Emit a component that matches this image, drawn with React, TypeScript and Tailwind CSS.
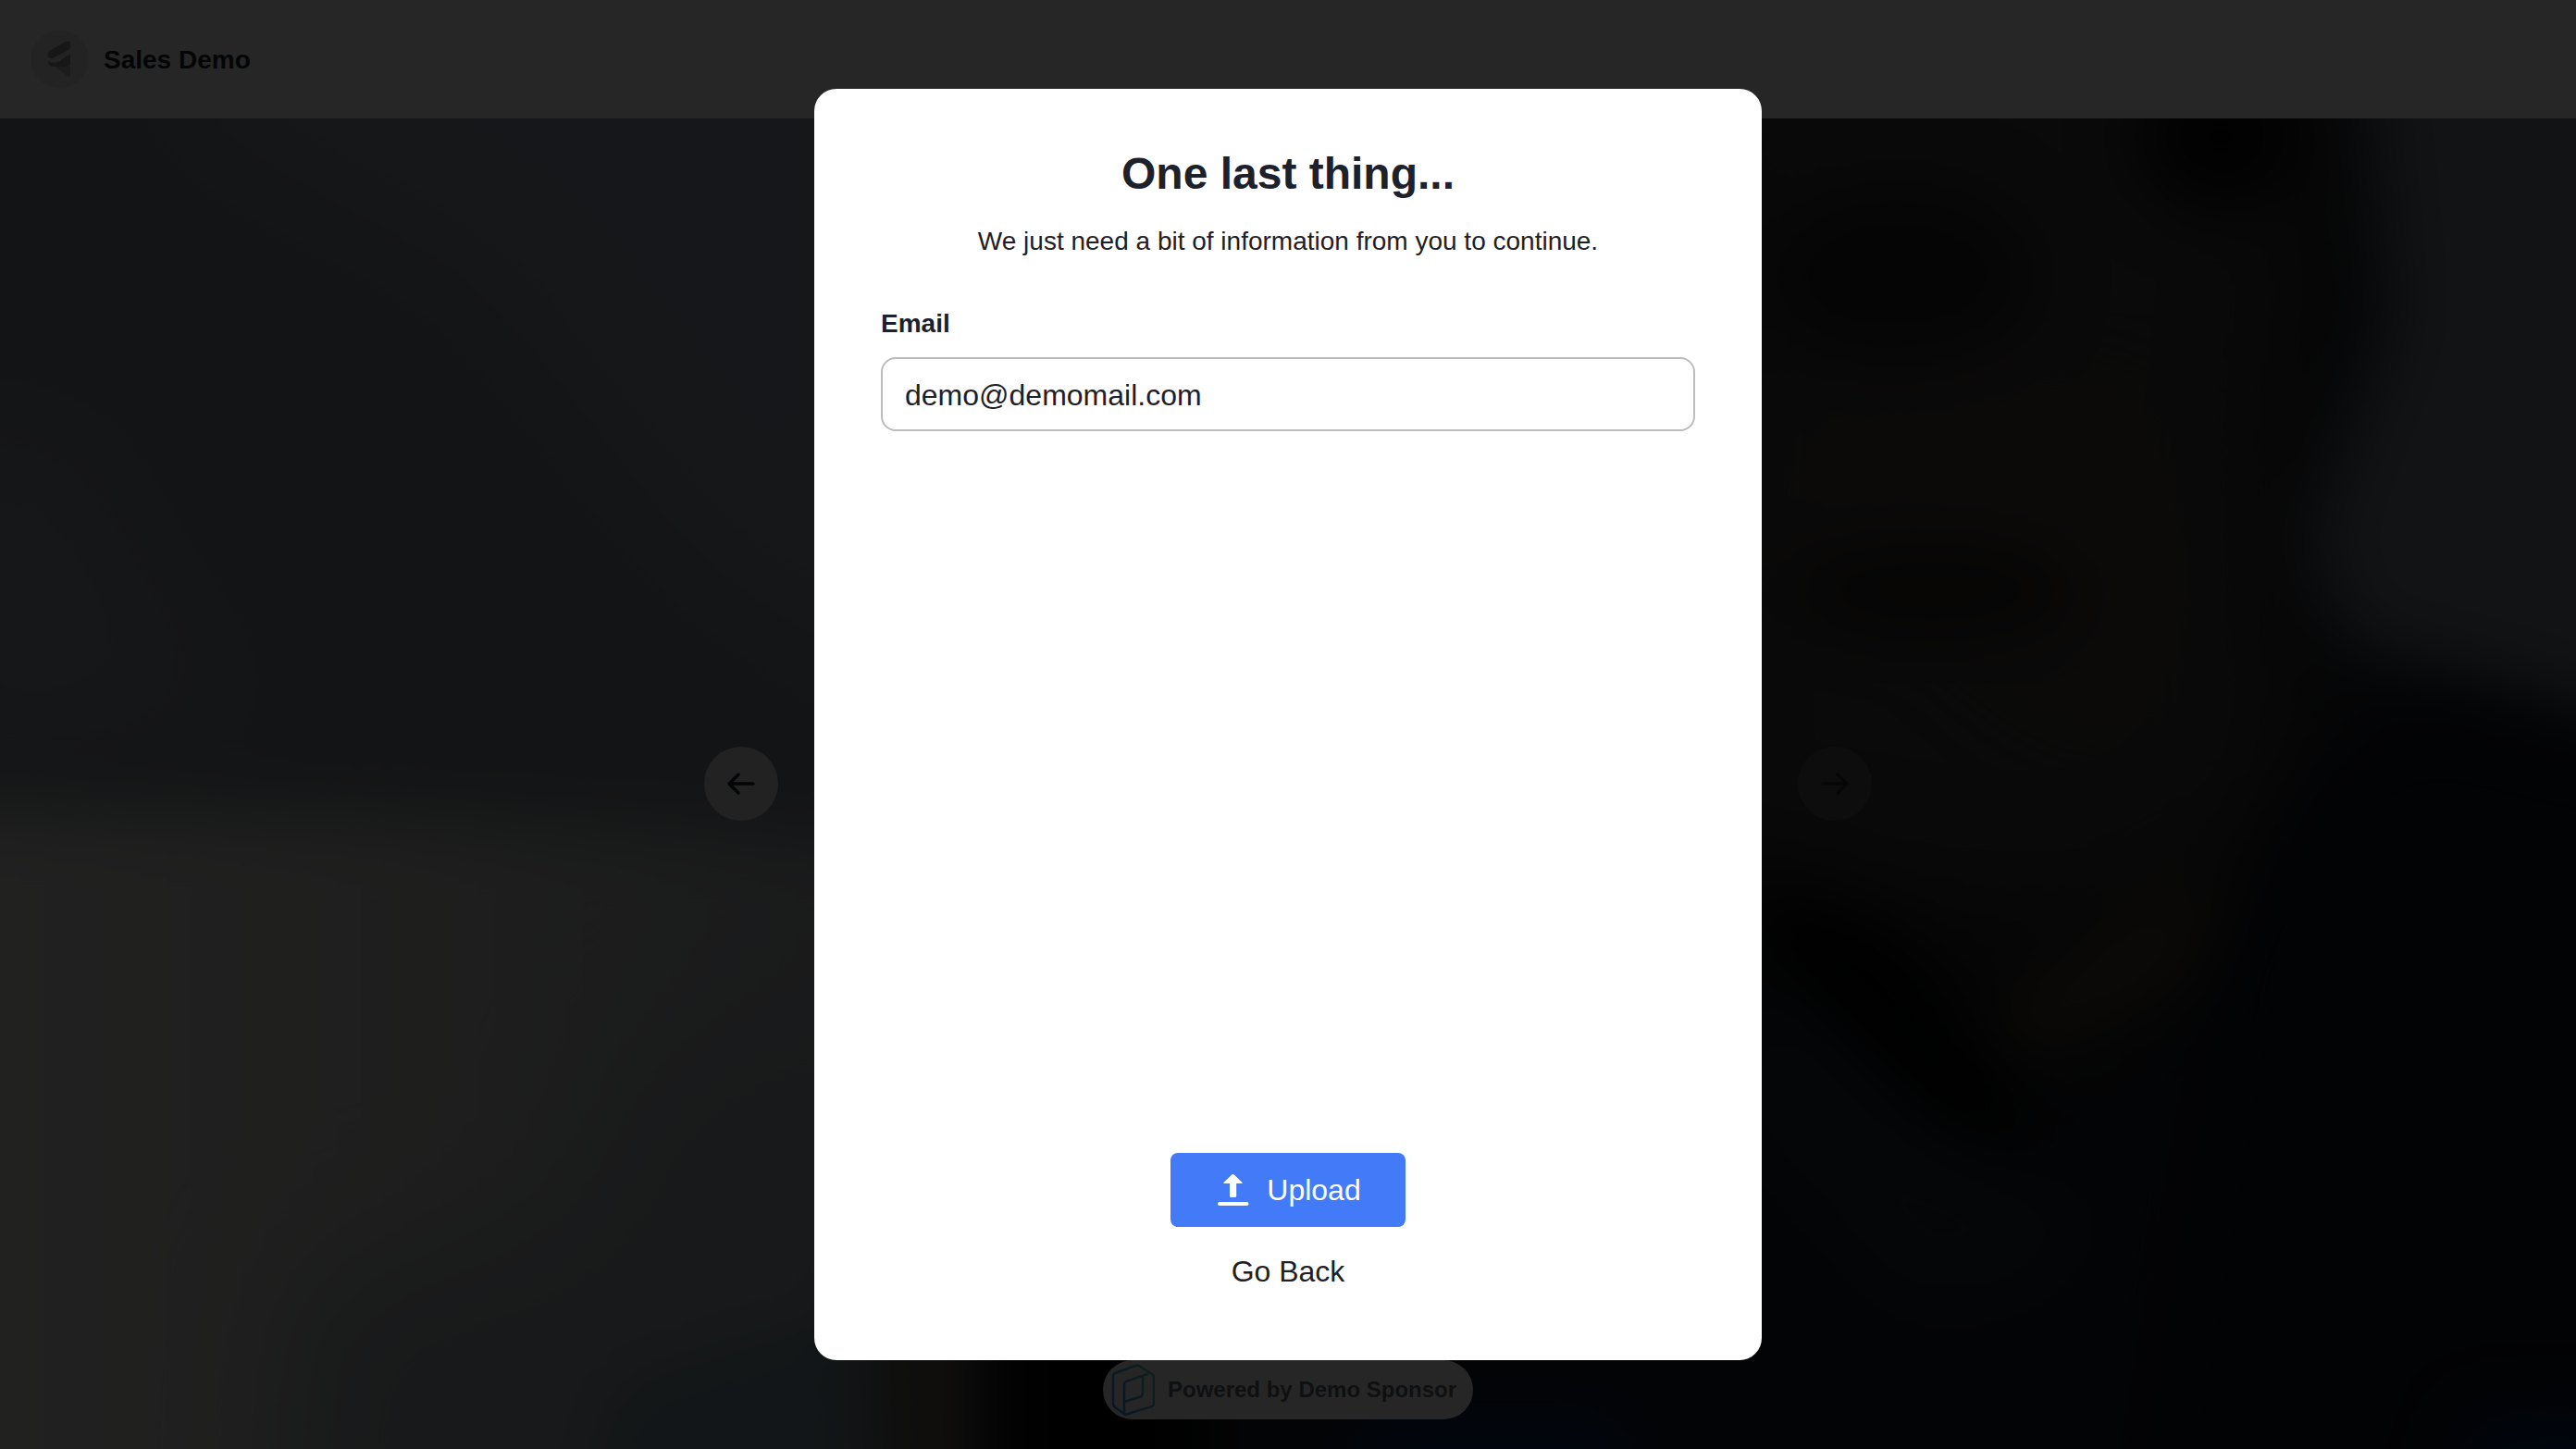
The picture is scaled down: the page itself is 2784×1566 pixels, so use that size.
import { useState } from "react";

// Blurred photo behind the carousel
function Backdrop() {
  return (
    <svg
      className="absolute inset-0 h-full w-full"
      viewBox="0 0 2784 1438"
      preserveAspectRatio="none"
      aria-hidden="true"
    >
      <defs>
        <filter id="soft" x="-50%" y="-50%" width="200%" height="200%" colorInterpolationFilters="sRGB">
          <feGaussianBlur stdDeviation="70" />
        </filter>
        <filter id="edge" x="-50%" y="-50%" width="200%" height="200%" colorInterpolationFilters="sRGB">
          <feGaussianBlur stdDeviation="36" />
        </filter>
        <linearGradient id="floor" x1="0" y1="0" x2="1" y2="0">
          <stop offset="0" stopColor="#dfdfdd" />
          <stop offset="0.15" stopColor="#dadad7" />
          <stop offset="0.45" stopColor="#c8cac4" />
          <stop offset="0.75" stopColor="#b0b4b8" />
          <stop offset="1" stopColor="#9aa3aa" />
        </linearGradient>
      </defs>
      <rect width="2784" height="1438" fill="#81868e" />
      <path d="M200 -200H1000V640L760 480L520 170L200 0Z" fill="#959cab" filter="url(#soft)" />
      <path d="M-100 330L80 340L190 560L300 640L-100 700Z" fill="#959ba2" filter="url(#soft)" />
      <path d="M-200 745L400 755L1200 790V1700H-200Z" fill="url(#floor)" filter="url(#edge)" />
      <path d="M320 1260L620 1180L700 1000L1000 940V1700H300Z" fill="#a2a8ae" filter="url(#soft)" />
      <path d="M660 1360L1000 1260V1600H600Z" fill="#7c94a0" filter="url(#edge)" />
      <path d="M1000 -200H3000V1700H990Z" fill="#1a1e26" filter="url(#edge)" />
      <path d="M930 1250H1070V1600H960Z" fill="#6b625c" filter="url(#edge)" />
      <path d="M1080 1250H1300V1600H1080Z" fill="#050505" filter="url(#edge)" />
      <path d="M1850 -200H2520L2450 500L2500 720L2300 860L2150 860L1800 800Z" fill="#484242" filter="url(#soft)" />
      <ellipse cx="2050" cy="170" rx="150" ry="100" fill="#2a2424" filter="url(#edge)" />
      <path d="M1930 370L2160 340L2330 380L2360 590L2270 600L2100 450L1940 460Z" fill="#504740" filter="url(#soft)" />
      <ellipse cx="2090" cy="510" rx="160" ry="50" fill="#2a2421" filter="url(#edge)" />
      <ellipse cx="2400" cy="20" rx="90" ry="80" fill="#0b0b0b" filter="url(#edge)" />
      <path d="M2550 -100H2950V690L2730 620L2540 570L2490 460L2580 220Z" fill="#747f88" filter="url(#edge)" />
      <path d="M2500 700L2620 640L2950 720V1500H2300L2400 900Z" fill="#10141e" filter="url(#edge)" />
      <path d="M2130 980L2400 800L2360 930L2210 1010Z" fill="#594833" filter="url(#edge)" />
      <path d="M1900 820L2050 880L2200 1100L2130 1130L1900 900Z" fill="#040404" filter="url(#edge)" />
      <path d="M1900 930L2060 1090L2260 1190L2180 1270L2060 1280L1880 1080Z" fill="#222e3a" filter="url(#edge)" />
      <path d="M1480 1400H1760V1600H1400Z" fill="#0a2660" filter="url(#edge)" />
      <path d="M2680 1410H2850V1600H2620Z" fill="#0a2a68" filter="url(#edge)" />
    </svg>
  );
}

function BrandMark() {
  return (
    <svg className="h-16 w-16" viewBox="0 0 64 64" aria-hidden="true">
      <circle cx="32.500" cy="32" r="31.500" fill="#e8e8e8" />
      <path d="M44 13v6q0 2-2 3L26 30.500q-5 2-6.500-2v-2Q20 24 23 22L38 13.500Q41 12 44 13Z" fill="#979797" />
      <path d="M44 27v10q0 3-3 3H26Q20 40 20 34 26 37 33 34 37 29 44 27Z" fill="#9c9c9c" />
      <path d="M28 40H44V51Q41 51 38 48Z" fill="#bababa" />
    </svg>
  );
}

function SponsorMark() {
  return (
    <svg
      className="h-14 w-12"
      viewBox="0 0 48 56"
      fill="none"
      stroke="url(#sponsor)"
      strokeWidth="2.500"
      strokeLinejoin="round"
      strokeLinecap="round"
      aria-hidden="true"
    >
      <defs>
        <linearGradient id="sponsor" x1="0" y1="40" x2="48" y2="10" gradientUnits="userSpaceOnUse">
          <stop offset="0" stopColor="#3f8fef" />
          <stop offset="1" stopColor="#5fcfbc" />
        </linearGradient>
      </defs>
      <path d="M15 54L4 46Q3 45 3 43V14Q3 11 5 10L27 2Q29 1 31 2L45 11Q47 12 47 14V43Q47 45 45 46L19 54Q16 55 15 54Z" />
      <path d="M15 53V22Q15 20 17 19L40 11" />
      <path d="M15 41L33 35.500Q35 34.500 35 32V14" />
    </svg>
  );
}

function Arrow({ flip = false }: { flip?: boolean }) {
  return (
    <svg
      className={flip ? "h-8 w-8 rotate-180" : "h-8 w-8"}
      viewBox="0 0 32 32"
      fill="none"
      stroke="currentColor"
      strokeWidth="3.500"
      strokeLinecap="round"
      strokeLinejoin="round"
      aria-hidden="true"
    >
      <path d="M29 16H3M13 6L3 16L13 26" />
    </svg>
  );
}

function UploadIcon() {
  return (
    <svg className="h-9 w-9 overflow-visible" viewBox="0 0 36 36" fill="currentColor" aria-hidden="true">
      <path d="M19.500 1Q20.200 1 20.800 1.600L29 9.400Q30.500 11 28.500 11H23.200V24.500Q23.200 26 21.700 26H17.500Q16 26 16 24.500V11H10.500Q8.500 11 10 9.400L18.200 1.600Q18.800 1 19.500 1Z" />
      <rect x="3" y="31" width="33.500" height="4" rx="2" />
    </svg>
  );
}

export default function App() {
  const [email, setEmail] = useState("demo@demomail.com");

  return (
    <div className="relative flex h-screen w-full flex-col overflow-hidden bg-black font-['Liberation_Sans',Arial,sans-serif]">
      {/* Header */}
      <header className="flex h-32 shrink-0 items-center gap-4 bg-white px-8">
        <BrandMark />
        <h2 className="pt-0.5 text-[28px] leading-8 font-bold text-[#1d212c]">Sales Demo</h2>
      </header>

      {/* Carousel */}
      <main className="relative flex flex-1 items-center justify-center overflow-hidden">
        <Backdrop />
        <div className="relative flex w-[1262px] items-center justify-between">
          <button
            aria-label="Previous"
            className="flex h-20 w-20 items-center justify-center rounded-full bg-[#e0e3e0] text-[#1d212c]"
          >
            <Arrow />
          </button>
          <button
            aria-label="Next"
            className="flex h-20 w-20 items-center justify-center rounded-full bg-[#5a5859] text-[#2e2d30]"
          >
            <Arrow flip />
          </button>
        </div>

        {/* Sponsor badge */}
        <div className="absolute bottom-8 flex h-16 w-[400px] items-center gap-3.5 rounded-full bg-white pl-2">
          <SponsorMark />
          <p className="text-2xl font-bold whitespace-nowrap text-[#626b7c]">Powered by Demo Sponsor</p>
        </div>
      </main>

      {/* Modal */}
      <div className="absolute inset-0 flex items-center justify-center bg-black/85">
        <div className="flex h-[1374px] w-[1024px] flex-col items-center rounded-3xl bg-white px-18 pt-16 pb-16 text-[#1f2024]">
          <h1 className="text-5xl leading-[56px] font-bold text-[#1d212c]">One last thing...</h1>
          <p className="mt-6 text-[28px] leading-[42px]">
            We just need a bit of information from you to continue.
          </p>
          <label className="mt-12 flex w-full flex-col gap-4 text-[28px] leading-10 font-bold text-[#1d212c]">
            Email
            <input
              type="text"
              value={email}
              onChange={(e) => setEmail(e.target.value)}
              className="h-20 w-full rounded-2xl border-2 border-[#bbbcbd] px-6 pt-0.5 text-[32px] font-normal text-[#1f2024] outline-none"
            />
          </label>
          <button className="mt-auto flex h-20 w-[254px] shrink-0 items-center justify-center gap-5 rounded-lg bg-[#427af7] text-[32px] text-white">
            <UploadIcon />
            Upload
          </button>
          <button className="mt-4 h-16 text-[32px]">Go Back</button>
        </div>
      </div>
    </div>
  );
}
